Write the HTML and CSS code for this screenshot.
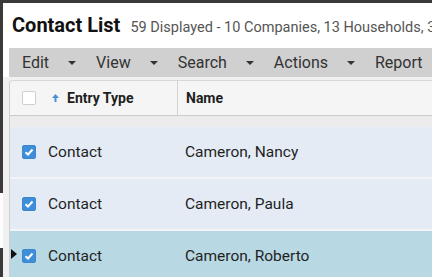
FILE: index.html
```html
<!DOCTYPE html>
<html lang="en">
<head>
    <meta charset="UTF-8">
    <title>Contact List</title>
    <link rel="stylesheet" href="styles.css">
</head>
<body>

<div class="frame">
    <div class="edge"></div>
    <div class="window">
        <div class="title-bar">
            <h1>Contact List</h1>
            <span class="summary">59 Displayed - 10 Companies, 13 Households, 36 Contacts</span>
        </div>

        <div class="toolbar">
            <div class="menu">Edit <span class="caret"></span></div>
            <div class="menu">View <span class="caret"></span></div>
            <div class="menu">Search <span class="caret"></span></div>
            <div class="menu">Actions <span class="caret"></span></div>
            <div class="menu">Report</div>
        </div>

        <div class="grid-area">
            <div class="grid">
                <div class="grid-head">
                    <div class="col-type">
                        <span class="check"></span>
                        <svg class="sort" width="7" height="8" viewBox="0 0 7 8"><path d="M3.5 0 L7 4 L4.5 4 L4.5 8 L2.5 8 L2.5 4 L0 4 Z" fill="#4a90d9"/></svg>
                        <span class="head-label">Entry Type</span>
                    </div>
                    <div class="col-name"><span class="head-label">Name</span></div>
                </div>
                <div class="band"></div>

                <div class="row">
                    <div class="col-type">
                        <span class="check checked"><svg width="10" height="8" viewBox="0 0 10 8"><path d="M1.5 4.2 L4 6.5 L8.5 1.5" fill="none" stroke="#fff" stroke-width="2"/></svg></span>
                        <span>Contact</span>
                    </div>
                    <div class="col-name">Cameron, Nancy</div>
                </div>
                <div class="row">
                    <div class="col-type">
                        <span class="check checked"><svg width="10" height="8" viewBox="0 0 10 8"><path d="M1.5 4.2 L4 6.5 L8.5 1.5" fill="none" stroke="#fff" stroke-width="2"/></svg></span>
                        <span>Contact</span>
                    </div>
                    <div class="col-name">Cameron, Paula</div>
                </div>
                <div class="row current">
                    <span class="pointer"></span>
                    <div class="col-type">
                        <span class="check checked"><svg width="10" height="8" viewBox="0 0 10 8"><path d="M1.5 4.2 L4 6.5 L8.5 1.5" fill="none" stroke="#fff" stroke-width="2"/></svg></span>
                        <span>Contact</span>
                    </div>
                    <div class="col-name">Cameron, Roberto</div>
                </div>
            </div>
        </div>
    </div>
</div>

</body>
</html>
```

FILE: styles.css
```css
body {
    margin: 0;
    padding: 0;
    background-color: #3a3a3a;
    font-family: Roboto, "Liberation Sans", sans-serif;
    color: #222;
    overflow: hidden;
}
.frame {
    display: flex;
    padding-top: 3px;
    height: 274px;
}
.edge {
    width: 3px;
    flex: none;
    /* the window behind shows through here */
    background: linear-gradient(to bottom, #3a3a3a 190px, #fdfdfd 190px, #fdfdfd 245px, #3a3a3a 245px);
}
.window {
    flex: 1;
    background-color: #fff;
    overflow: hidden;
}
.title-bar {
    display: flex;
    align-items: baseline;
    gap: 10px;
    height: 45px;
    padding: 10px 0 0 9px;
    box-sizing: border-box;
    white-space: nowrap;
    overflow: hidden;
}
h1 {
    margin: 0;
    font-size: 20px;
    font-weight: bold;
    color: #111;
}
.summary {
    font-size: 14.5px;
    color: #555;
}
.toolbar {
    display: flex;
    align-items: center;
    gap: 20px;
    height: 29px;
    margin-left: 6px;
    padding-left: 13px;
    background-color: #d0d0d0;
    font-size: 16px;
    color: #333;
    white-space: nowrap;
}
.menu {
    display: flex;
    align-items: center;
    gap: 19px;
}
.caret {
    width: 0;
    height: 0;
    border-left: 4px solid transparent;
    border-right: 4px solid transparent;
    border-top: 4px solid #333;
}
.grid-area {
    background-color: #f0f0f0;
    padding: 3px 0 0 6px;
    height: 200px;
}
.grid {
    border-left: 1px solid #cfcfcf;
    border-top: 1px solid #d8d8d8;
    border-top-left-radius: 4px;
    background-color: #f5f5f5;
    height: 100%;
}
.grid-head {
    display: flex;
    height: 34px;
    border-bottom: 1px solid #cbcbcb;
    font-size: 14px;
}
.grid-head .col-name {
    border-left: 1px solid #d2d2d2;
}
.head-label {
    font-weight: bold;
    color: #1e1e1e;
}
.col-type {
    display: flex;
    align-items: center;
    width: 167px;
    flex: none;
    padding-left: 12px;
    box-sizing: border-box;
}
.col-name {
    display: flex;
    align-items: center;
    padding-left: 8px;
}
.grid-head .sort {
    margin: 0 8px 0 16px;
}
.check {
    width: 14px;
    height: 14px;
    box-sizing: border-box;
    border: 1px solid #cfcfcf;
    border-radius: 2px;
    background-color: #fff;
    display: flex;
    align-items: center;
    justify-content: center;
}
.check.checked {
    border-color: #3a88d2;
    background-color: #3f8fd8;
}
.row .check {
    margin-right: 12px;
}
.band {
    height: 11px;
    background-color: #ececec;
}
.row {
    position: relative;
    display: flex;
    height: 50px;
    border-bottom: 2px solid #f2f4f8;
    background-color: #e4ebf5;
    font-size: 15.5px;
    color: #1f1f1f;
}
.row.current {
    background-color: #b8d8e4;
}
.pointer {
    position: absolute;
    left: 1px;
    top: 18px;
    width: 0;
    height: 0;
    border-top: 5px solid transparent;
    border-bottom: 5px solid transparent;
    border-left: 6px solid #111;
}
```
